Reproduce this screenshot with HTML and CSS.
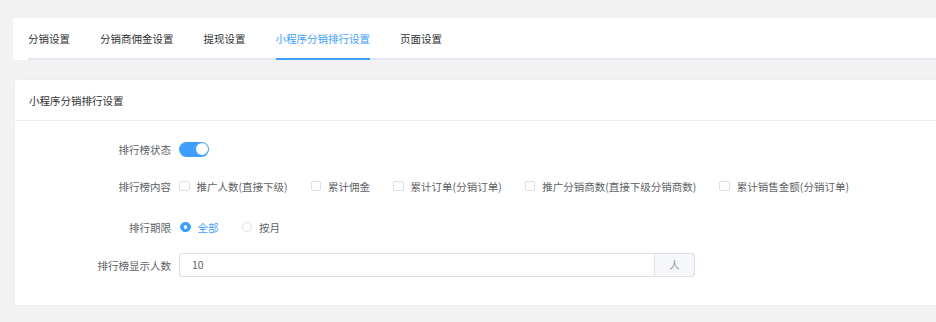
FILE: index.html
```html
<!DOCTYPE html>
<html lang="zh-CN">
<head>
<meta charset="utf-8">
<link rel="stylesheet" href="styles.css">
</head>
<body>
<div class="page">
  <div class="tabbar">
    <div class="tabs">
      <div class="tab">分销设置</div>
      <div class="tab">分销商佣金设置</div>
      <div class="tab">提现设置</div>
      <div class="tab active">小程序分销排行设置</div>
      <div class="tab">页面设置</div>
    </div>
  </div>
  <div class="card">
    <div class="card-header">小程序分销排行设置</div>
    <div class="card-body">
      <div class="row r1">
        <div class="label">排行榜状态</div>
        <div class="content"><span class="switch on"><span class="knob"></span></span></div>
      </div>
      <div class="row r2">
        <div class="label">排行榜内容</div>
        <div class="content">
          <label class="check"><span class="box"></span>推广人数(直接下级)</label>
          <label class="check"><span class="box"></span>累计佣金</label>
          <label class="check"><span class="box"></span>累计订单(分销订单)</label>
          <label class="check"><span class="box"></span>推广分销商数(直接下级分销商数)</label>
          <label class="check"><span class="box"></span>累计销售金额(分销订单)</label>
        </div>
      </div>
      <div class="row r3">
        <div class="label">排行期限</div>
        <div class="content">
          <label class="radio checked"><span class="dot"></span>全部</label>
          <label class="radio"><span class="dot"></span>按月</label>
        </div>
      </div>
      <div class="row r4">
        <div class="label">排行榜显示人数</div>
        <div class="content">
          <div class="input-group">
            <div class="input">10</div>
            <div class="append">人</div>
          </div>
        </div>
      </div>
    </div>
  </div>
</div>
</body>
</html>
```

FILE: styles.css
```css
* { box-sizing: border-box; }
html, body { margin: 0; padding: 0; }
body {
  background: #f2f2f3;
  font-family: "Noto Sans CJK SC", "Microsoft YaHei", sans-serif;
  font-size: 10.5px;
  color: #606266;
  width: 936px;
  height: 322px;
  overflow: hidden;
}
.page { padding: 18px 0 0 13px; width: 960px; }
.tabbar {
  background: #fff;
  padding: 0 0 0 15px;
  height: 42px;
}
.tabs {
  display: flex;
  height: 42px;
  border-bottom: 2px solid #e4e7ed;
}
.tab {
  height: 40px;
  line-height: 42px;
  padding: 0 15px;
  color: #303133;
  position: relative;
  white-space: nowrap;
}
.tab:first-child { padding-left: 0; }
.tab.active { color: #409eff; }
.tab.active::after {
  content: "";
  position: absolute;
  left: 15px; right: 15px; bottom: -2px;
  height: 2px;
  background: #409eff;
}

.card {
  margin: 19px 0 0 1px;
  background: #fff;
  border: 1px solid #ebeef5;
  border-radius: 3px;
  height: 227px;
}
.card-header {
  height: 41px;
  line-height: 41px;
  padding-left: 14px;
  color: #303133;
  border-bottom: 1px solid #ebeef5;
}
.card-body { padding-top: 13px; }
.row { display: flex; align-items: center; height: 30px; }
.r2 { margin-top: 7px; }
.r3 { margin-top: 11px; }
.r4 { margin-top: 8px; }
.label {
  width: 164px;
  text-align: right;
  padding-right: 8px;
  color: #606266;
  white-space: nowrap;
}
.content { display: flex; align-items: center; }

.switch {
  display: inline-block;
  position: relative;
  width: 30px; height: 15px;
  border-radius: 8px;
  background: #409eff;
}
.knob {
  position: absolute;
  top: 1.5px; right: 1.5px;
  width: 12px; height: 12px;
  border-radius: 50%;
  background: #fff;
}

.check {
  display: inline-flex;
  align-items: center;
  margin-right: 23px;
  color: #606266;
  white-space: nowrap;
}
.check .box {
  width: 10.5px; height: 10.5px;
  border: 1px solid #dcdfe6;
  border-radius: 2px;
  background: #fff;
  margin-right: 7px;
}

.radio {
  display: inline-flex;
  align-items: center;
  margin-right: 22px;
  margin-left: 1px;
  color: #606266;
}
.radio .dot {
  width: 10.5px; height: 10.5px;
  border: 1px solid #dcdfe6;
  border-radius: 50%;
  margin-right: 7px;
  background: #fff;
  position: relative;
}
.radio.checked { color: #409eff; }
.radio.checked .dot { background: #409eff; border-color: #409eff; }
.radio.checked .dot::after {
  content: "";
  position: absolute;
  left: 50%; top: 50%;
  width: 3.5px; height: 3.5px;
  margin: -1.75px 0 0 -1.75px;
  border-radius: 50%;
  background: #fff;
}

.input-group { display: flex; height: 24px; width: 516px; }
.input {
  flex: 1;
  border: 1px solid #dcdfe6;
  border-right: none;
  border-radius: 3px 0 0 3px;
  line-height: 22px;
  padding-left: 12px;
  color: #606266;
}
.append {
  width: 41px;
  border: 1px solid #dcdfe6;
  border-radius: 0 3px 3px 0;
  background: #f5f7fa;
  color: #909399;
  text-align: center;
  line-height: 22px;
}
```
